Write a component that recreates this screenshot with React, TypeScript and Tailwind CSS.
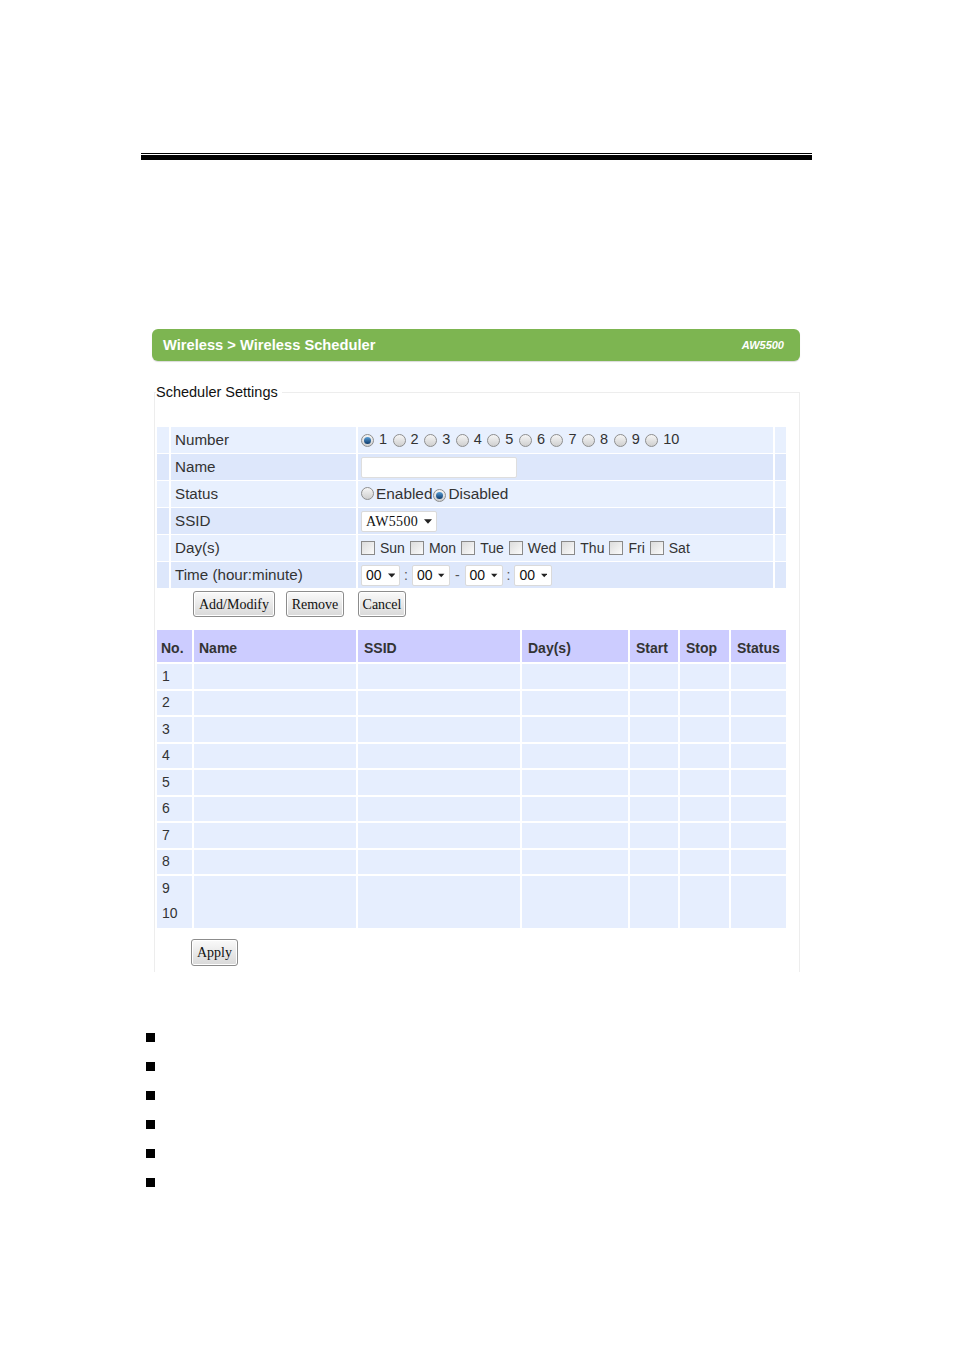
import React from 'react';

const rowBg = ['bg-[#e8f0fe]', 'bg-[#dde7fb]'];

function Radio({ on }: { on?: boolean }) {
  return (
    <span className="inline-flex h-[13px] w-[13px] shrink-0 items-center justify-center rounded-full border border-[#8e8e8e] bg-linear-to-b from-[#f6f6f6] to-[#cfcfcf]">
      {on && <span className="h-[7px] w-[7px] rounded-full bg-linear-to-b from-[#5aa0d8] to-[#0d3a6a]" />}
    </span>
  );
}

function Check() {
  return (
    <span className="inline-block h-[14px] w-[14px] shrink-0 border border-[#8a8a8a] bg-linear-to-br from-[#dcdcdc] to-[#fbfbfb]" />
  );
}

function Arrow() {
  return (
    <svg width="9" height="5" viewBox="0 0 9 5" className="ml-[6px]">
      <path d="M0 0h9L4.5 5z" fill="#222" />
    </svg>
  );
}

function Select({ value, serif, w }: { value: string; serif?: boolean; w: string }) {
  return (
    <span
      className={`inline-flex h-[21px] items-center justify-between rounded-[2px] border border-[#dadada] bg-white pl-[4px] pr-[4px] text-[14px] text-[#111] ${w} ${
        serif ? "font-['Liberation_Serif',serif] tracking-[0.3px]" : "font-['Liberation_Sans_Narrow','Liberation_Sans',sans-serif]"
      }`}
    >
      {value}
      <Arrow />
    </span>
  );
}

function Btn({ label, w }: { label: string; w: string }) {
  return (
    <button
      type="button"
      className={`h-[26px] ${w} rounded-[3px] border border-[#8c8c8c] bg-linear-to-b from-[#fafafa] to-[#d9d9d9] font-['Liberation_Serif',serif] text-[14px] text-[#111] shadow-[inset_0_0_0_1px_#fff]`}
    >
      {label}
    </button>
  );
}

export default function App() {
  const days = ['Sun', 'Mon', 'Tue', 'Wed', 'Thu', 'Fri', 'Sat'];
  const settings: { label: string; value: React.ReactNode }[] = [
    {
      label: 'Number',
      value: (
        <div className="flex items-center text-[14.5px]">
          {Array.from({ length: 10 }, (_, i) => (
            <span key={i} className="mr-[5.5px] flex items-center">
              <Radio on={i === 0} />
              <span className="ml-[5px]">{i + 1}</span>
            </span>
          ))}
        </div>
      ),
    },
    {
      label: 'Name',
      value: <span className="block h-[21px] w-[156px] rounded-[2px] border border-[#dedede] bg-white" />,
    },
    {
      label: 'Status',
      value: (
        <div className="flex items-center text-[15.4px]">
          <Radio />
          <span className="ml-[2px]">Enabled</span>
          <span className="ml-[1px]"><Radio on /></span>
          <span className="ml-[2px]">Disabled</span>
        </div>
      ),
    },
    { label: 'SSID', value: <Select value="AW5500" serif w="w-[76px]" /> },
    {
      label: 'Day(s)',
      value: (
        <div className="flex items-center text-[14px]">
          {days.map((d) => (
            <span key={d} className="mr-[5px] flex items-center">
              <Check />
              <span className="ml-[5px]">{d}</span>
            </span>
          ))}
        </div>
      ),
    },
    {
      label: 'Time (hour:minute)',
      value: (
        <div className="flex items-center">
          <Select value="00" w="w-[39px]" />
          <span className="mx-[4px] text-[#555]">:</span>
          <Select value="00" w="w-[38px]" />
          <span className="mx-[5px] text-[#555]">-</span>
          <Select value="00" w="w-[38px]" />
          <span className="mx-[4px] text-[#555]">:</span>
          <Select value="00" w="w-[38px]" />
        </div>
      ),
    },
  ];

  const cols = 'grid grid-cols-[35px_162px_162px_106px_48px_49px_55px] gap-x-[2px]';
  const rowH = ['h-[24.5px]', 'h-[24.5px]', 'h-[24.5px]', 'h-[24.5px]', 'h-[24.5px]', 'h-[24.5px]', 'h-[24.5px]', 'h-[24.5px]', 'h-[25px]', 'h-[27px] pb-[3px]'];

  return (
    <div className="relative h-[1350px] w-[954px] bg-white font-['Liberation_Sans',Arial,sans-serif] text-[14px] text-[#333]">
      {/* page rule */}
      <div className="pl-[141px] pt-[153px]">
        <div className="h-px w-[671px] bg-black" />
        <div className="mt-px h-[5px] w-[671px] bg-black" />
      </div>

      {/* title bar */}
      <div className="ml-[152px] mt-[169px] flex h-[32px] w-[648px] items-center justify-between rounded-[6px] bg-[#7db551] pl-[11px] pr-[16px] text-white shadow-[0_1px_1px_rgba(0,0,0,0.15)]">
        <span className="text-[14.7px] font-bold">Wireless &gt; Wireless Scheduler</span>
        <span className="text-[11px] font-bold italic">AW5500</span>
      </div>

      <fieldset className="ml-[154px] mt-[22px] w-[646px] border border-b-0 border-[#ededed] pb-[6px] pl-[2px] pr-[13px]">
        <legend className="-ml-px pr-[4px] text-[14.5px] leading-[18px] text-[#111]">Scheduler Settings</legend>

        <div className="mt-[26px] flex flex-col gap-y-px">
          {settings.map((r, i) => (
            <div key={r.label} className="grid h-[26px] grid-cols-[12px_185px_415px_11px] gap-x-[2px]">
              <div className={rowBg[i % 2]} />
              <div className={`${rowBg[i % 2]} flex items-center pl-[4px] text-[15.2px]`}>{r.label}</div>
              <div className={`${rowBg[i % 2]} flex items-center pl-[3px]`}>{r.value}</div>
              <div className={rowBg[i % 2]} />
            </div>
          ))}
        </div>

        <div className="mt-[3px] flex items-center pl-[36px]">
          <Btn label="Add/Modify" w="w-[82px]" />
          <span className="ml-[11px]"><Btn label="Remove" w="w-[58px]" /></span>
          <span className="ml-[14px]"><Btn label="Cancel" w="w-[48px]" /></span>
        </div>

        <div className="mt-[13px]">
          <div className={`${cols} h-[32px] font-bold`}>
            {['No.', 'Name', 'SSID', 'Day(s)', 'Start', 'Stop', 'Status'].map((h, i) => (
              <div key={h} className={`flex items-center bg-[#ccccff] pt-[5px] ${i === 0 ? 'pl-[4px]' : i === 1 ? 'pl-[5px]' : 'pl-[6px]'}`}>
                {h}
              </div>
            ))}
          </div>
          {Array.from({ length: 10 }, (_, i) => (
            <div key={i} className={`${cols} ${i === 9 ? '' : 'mt-[2px]'}`}>
              <div className={`flex items-center bg-[#e6eefe] pl-[5px] ${rowH[i]}`}>{i + 1}</div>
              {Array.from({ length: 6 }, (_, j) => (
                <div key={j} className="bg-[#e6eefe]" />
              ))}
            </div>
          ))}
        </div>

        <div className="mt-[11px] pl-[34px]">
          <Btn label="Apply" w="w-[47px] h-[27px]" />
        </div>
      </fieldset>

      <ul className="ml-[146px] mt-[61px] flex flex-col gap-y-[20px]">
        {Array.from({ length: 6 }, (_, i) => (
          <li key={i} className="h-[9px] w-[9px] bg-black" />
        ))}
      </ul>
    </div>
  );
}
